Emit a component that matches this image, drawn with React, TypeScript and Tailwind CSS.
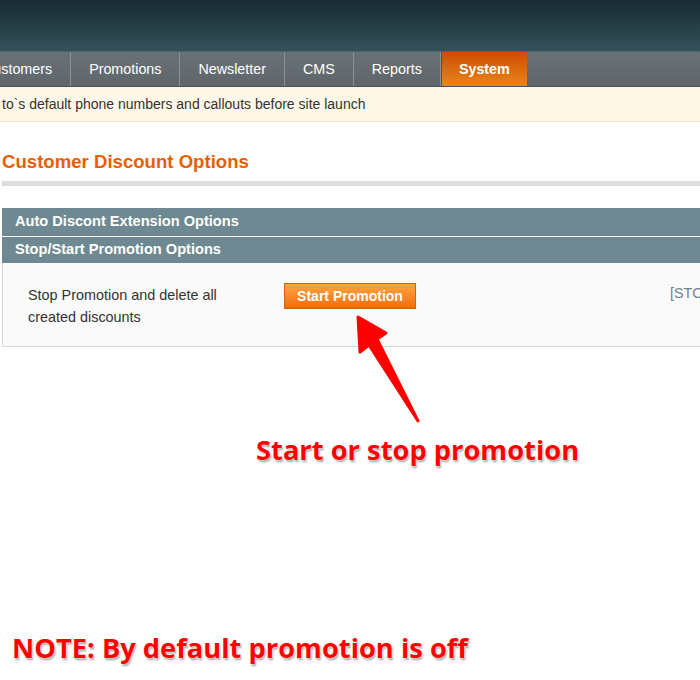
import React from "react";

const tabs = ["Promotions", "Newsletter", "CMS", "Reports"];

export default function App() {
  return (
    <div className="relative w-[700px] h-[680px] overflow-hidden bg-white font-['Liberation_Sans',Arial,sans-serif]">
      {/* header */}
      <div className="h-[52px] bg-gradient-to-b from-[#182b33] to-[#34525b] border-b border-[#4d6771]" />
      {/* nav */}
      <div className="h-[35px] flex bg-gradient-to-b from-[#6b7277] to-[#5f666b] border-b border-[#4c5256] text-[14.3px] text-white">
        <div className="shrink-0 ml-[-35px] px-[18px] pt-[1px] flex items-center border-r border-[#8a9195]">Customers</div>
        {tabs.map((t) => (
          <div key={t} className="shrink-0 px-[18px] pt-[1px] flex items-center border-r border-[#8a9195]">
            {t}
          </div>
        ))}
        <div className="shrink-0 w-[86px] pt-[1px] flex items-center justify-center font-bold bg-gradient-to-b from-[#cf4a02] to-[#e7861a] border-l border-[#4c5256]">
          System
        </div>
      </div>
      {/* notice */}
      <div className="h-[35px] flex items-center pl-[2px] bg-[#fff8e8] border-b border-[#f0e6c8] text-[14px] text-[#333]">
        to`s default phone numbers and callouts before site launch
      </div>
      {/* title */}
      <div className="mt-[29px] pl-[2px] text-[18.6px] leading-[22px] font-bold text-[#eb5e00]">
        Customer Discount Options
      </div>
      <div className="mt-[8px] ml-[2px] h-[5px] bg-[#dedede]" />
      {/* sections */}
      <div className="mt-[22px] ml-[2px]">
        <div className="h-[28px] flex items-center pl-[13px] bg-[#6f8992] text-white font-bold text-[14.6px]">
          Auto Discont Extension Options
        </div>
        <div className="h-[1px] bg-white" />
        <div className="h-[26px] flex items-center pl-[13px] bg-[#6f8992] text-white font-bold text-[14.6px]">
          Stop/Start Promotion Options
        </div>
        <div className="h-[84px] bg-[#fafafa] border-l border-b border-[#d6d6d6] flex text-[14.4px] text-[#333]">
          <div className="shrink-0 pl-[25px] pt-[21px] w-[281px] leading-[22px]">
            Stop Promotion and delete all
            <br />
            created discounts
          </div>
          <div className="shrink-0 pt-[20px]">
            <div className="w-[132px] h-[26px] flex items-center justify-center bg-gradient-to-b from-[#ffa640] to-[#f26b02] border border-[#d2630c] text-white font-bold text-[14px]">
              Start Promotion
            </div>
          </div>
          <div className="shrink-0 whitespace-nowrap ml-[254px] pt-[20px] text-[#6f8590]">[STOP]</div>
        </div>
      </div>
      {/* arrow */}
      <svg className="absolute left-0 top-0" width="700" height="680">
        <path
          d="M358,317 L386,333 L377,339 L418,421 L369,345 L360,352 Z"
          fill="#ff0000"
          stroke="#ff0000"
          strokeWidth="3"
          strokeLinejoin="round"
        />
      </svg>
      <div className="absolute left-[256px] top-[431px] text-[27.3px] leading-[38px] font-bold text-[#ff0000] font-['Open_Sans',sans-serif] [text-shadow:0_0_2px_#fff,0_0_2px_#fff,1px_2px_2px_#999]">
        Start or stop promotion
      </div>
      <div className="absolute left-[12px] top-[629px] text-[27.3px] leading-[38px] font-bold text-[#ff0000] font-['Open_Sans',sans-serif] [text-shadow:0_0_2px_#fff,0_0_2px_#fff,1px_2px_2px_#999]">
        NOTE: By default promotion is off
      </div>
    </div>
  );
}
